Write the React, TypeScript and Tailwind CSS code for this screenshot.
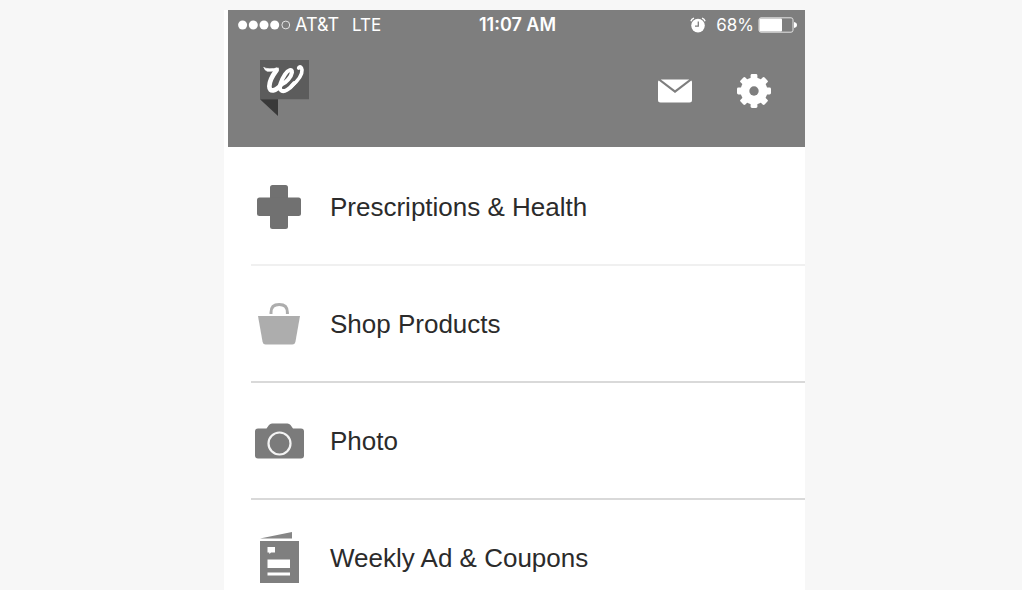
import type { ReactNode } from "react";

interface MenuItem {
  label: string;
  href: string;
  icon: ReactNode;
  divider: string;
}

const items: MenuItem[] = [
  {
    label: "Prescriptions & Health",
    href: "#prescriptions",
    icon: <CrossIcon />,
    divider: "border-b-2 border-[#f0f0f0]",
  },
  {
    label: "Shop Products",
    href: "#shop",
    icon: <BasketIcon />,
    divider: "border-b-2 border-[#d9d9d9]",
  },
  {
    label: "Photo",
    href: "#photo",
    icon: <CameraIcon />,
    divider: "border-b-2 border-[#d9d9d9]",
  },
  {
    label: "Weekly Ad & Coupons",
    href: "#weekly-ad",
    icon: <FlyerIcon />,
    divider: "",
  },
];

export default function App() {
  return (
    <div className="flex h-screen justify-center overflow-hidden bg-[#f7f7f7] pt-[10px] pl-[7px]">
      <div className="w-full max-w-[581px] bg-white pl-1">
        <header className="h-[137px] bg-[#7e7e7e] text-white">
          <StatusBar />
          <Toolbar />
        </header>
        <nav aria-label="Main menu" className="pt-[2px] pl-[23px]">
          <ul>
            {items.map((item) => (
              <li key={item.label} className={item.divider}>
                <MenuLink item={item} />
              </li>
            ))}
          </ul>
        </nav>
      </div>
    </div>
  );
}

function StatusBar() {
  return (
    <div className="grid h-[30px] grid-cols-[1fr_auto_1fr] items-center pr-2 pl-[10px] font-['Inter','Liberation_Sans',sans-serif] text-[17px] leading-5">
      <div className="flex items-center">
        <SignalDots />
        <span className="ml-1 text-[18px]">AT&amp;T</span>
        <span className="ml-[13px]">LTE</span>
      </div>
      <span className="text-[18px] font-semibold">11:07 AM</span>
      <div className="flex items-center justify-end">
        <AlarmIcon />
        <span className="ml-[10px]">68%</span>
        <BatteryIcon />
      </div>
    </div>
  );
}

function Toolbar() {
  return (
    <div className="flex items-start pt-5 pr-[34px] pl-8">
      <Logo />
      <div className="mt-[14px] ml-auto flex items-center gap-[45px]">
        <button type="button" aria-label="Messages">
          <MailIcon />
        </button>
        <button type="button" aria-label="Settings">
          <GearIcon />
        </button>
      </div>
    </div>
  );
}

function MenuLink({ item }: { item: MenuItem }) {
  return (
    <a href={item.href} className="flex h-[115px] items-center text-[#2b2b2b]">
      <span className="flex w-14 justify-center">{item.icon}</span>
      <span className="ml-[23px] font-['Liberation_Sans',sans-serif] text-[26px] leading-8">
        {item.label}
      </span>
    </a>
  );
}

function SignalDots() {
  return (
    <svg width="53" height="10" viewBox="0 0 53 10" fill="#fff" aria-hidden="true">
      <circle cx="4.6" cy="5" r="4.5" />
      <circle cx="15.3" cy="5" r="4.5" />
      <circle cx="26" cy="5" r="4.5" />
      <circle cx="36.7" cy="5" r="4.5" />
      <circle cx="47.8" cy="5" r="3.9" fill="none" stroke="#e4e4e4" />
    </svg>
  );
}

function AlarmIcon() {
  return (
    <svg width="16" height="16" viewBox="0 0 16 16" aria-hidden="true">
      <circle cx="8" cy="8.6" r="6.8" fill="#fff" />
      <path d="M8.3 4.6v4.5H5" fill="none" stroke="#7e7e7e" strokeWidth="1.3" />
      <path
        d="M.9 4.2Q1.6 2 4 1.2M15.1 4.2Q14.4 2 12 1.2"
        fill="none"
        stroke="#fff"
        strokeWidth="1.4"
      />
    </svg>
  );
}

function BatteryIcon() {
  return (
    <svg className="ml-1" width="39" height="16" viewBox="0 0 39 16" aria-hidden="true">
      <rect x="1" y=".8" width="34" height="14.4" rx="2" fill="none" stroke="#e4e4e4" />
      <rect x="1.5" y="1.5" width="22.5" height="13" rx="1" fill="#fff" />
      <path d="M36 5q3 .6 3 3t-3 3z" fill="#fff" />
    </svg>
  );
}

function Logo() {
  return (
    <svg width="49" height="56" viewBox="0 0 147 168" role="img" aria-label="W">
      <path d="M0 0h147v118H0z" fill="#5c5c5c" />
      <path d="M0 118h54v50z" fill="#393939" />
      <g fill="none" stroke="#fff" strokeLinecap="round" strokeLinejoin="round">
        <path d="M12 23Q22 29 56 24L50 32Q34 34 22 34Q14 31 12 23z" fill="#fff" strokeWidth="2" />
        <path d="M50 30C38 46 28 65 28 79C28 98 48 94 63 74" strokeWidth="14" />
        <path
          d="M64 74C79 68 94 50 96 37C97 25 84 29 75 43C63 61 56 82 62 90C71 100 90 86 103 69"
          strokeWidth="12"
        />
        <path d="M94 79C112 64 127 44 126 30C125 20 118 18 116 24" strokeWidth="11" />
      </g>
    </svg>
  );
}

function MailIcon() {
  return (
    <svg width="34" height="24" viewBox="0 0 34 24" fill="#fff" aria-hidden="true">
      <path d="M2.8.5h28.4L17 11.2z" />
      <path d="M.7 1.4 17 14.1 33.3 1.4Q34 2 34 3v18q0 2.5-2.5 2.5h-29Q0 23.5 0 21V3Q0 2 .7 1.4z" />
    </svg>
  );
}

function GearIcon() {
  const angles = [0, 45, 90, 135];
  return (
    <svg width="34" height="34" viewBox="-17 -17 34 34" fill="#fff" aria-hidden="true">
      {angles.map((a) => (
        <rect key={a} x="-3.4" y="-17" width="6.8" height="34" rx="1.4" transform={`rotate(${a})`} />
      ))}
      <circle r="13.4" />
      <circle r="4.7" fill="#7e7e7e" />
    </svg>
  );
}

function CrossIcon() {
  return (
    <svg width="44" height="44" viewBox="0 0 44 44" fill="#717171" aria-hidden="true">
      <rect x="13" y="0" width="18" height="44" rx="2.5" />
      <rect x="0" y="12.5" width="44" height="18.5" rx="2.5" />
    </svg>
  );
}

function BasketIcon() {
  return (
    <svg width="44" height="42" viewBox="0 0 44 42" aria-hidden="true">
      <path
        d="M14 11V9.5C14 4 17 1.6 22.2 1.6S30.4 4 30.4 9.5V11"
        fill="none"
        stroke="#adadad"
        strokeWidth="3"
      />
      <path d="M1 13h42l-4.6 26q-.6 2.5-3 2.5H8.6q-2.4 0-3-2.5z" fill="#adadad" />
    </svg>
  );
}

function CameraIcon() {
  return (
    <svg width="49" height="36" viewBox="0 0 49 36" aria-hidden="true">
      <path
        d="M3 5.5h8.5L14 2q1.2-1.5 3-1.5h15.5q1.8 0 3 1.5l2.5 3.5h8q3 0 3 3v24q0 3-3 3H3q-3 0-3-3v-24q0-3 3-3z"
        fill="#7b7b7b"
      />
      <circle cx="24.5" cy="20.5" r="11" fill="none" stroke="#f4f4f4" strokeWidth="2.2" />
    </svg>
  );
}

function FlyerIcon() {
  return (
    <svg width="39" height="51" viewBox="0 0 39 51" aria-hidden="true">
      <path d="M0 6.5 32 0v6.5z" fill="#868686" />
      <path d="M0 9h39v42H0z" fill="#7f7f7f" />
      <path
        d="M7.5 15H15v5.5h-4L9.5 22l-.3-1.5H7.5zM7.5 27.5H30V36H7.5zM7.5 40.500H30v3H7.5z"
        fill="#fff"
      />
    </svg>
  );
}
